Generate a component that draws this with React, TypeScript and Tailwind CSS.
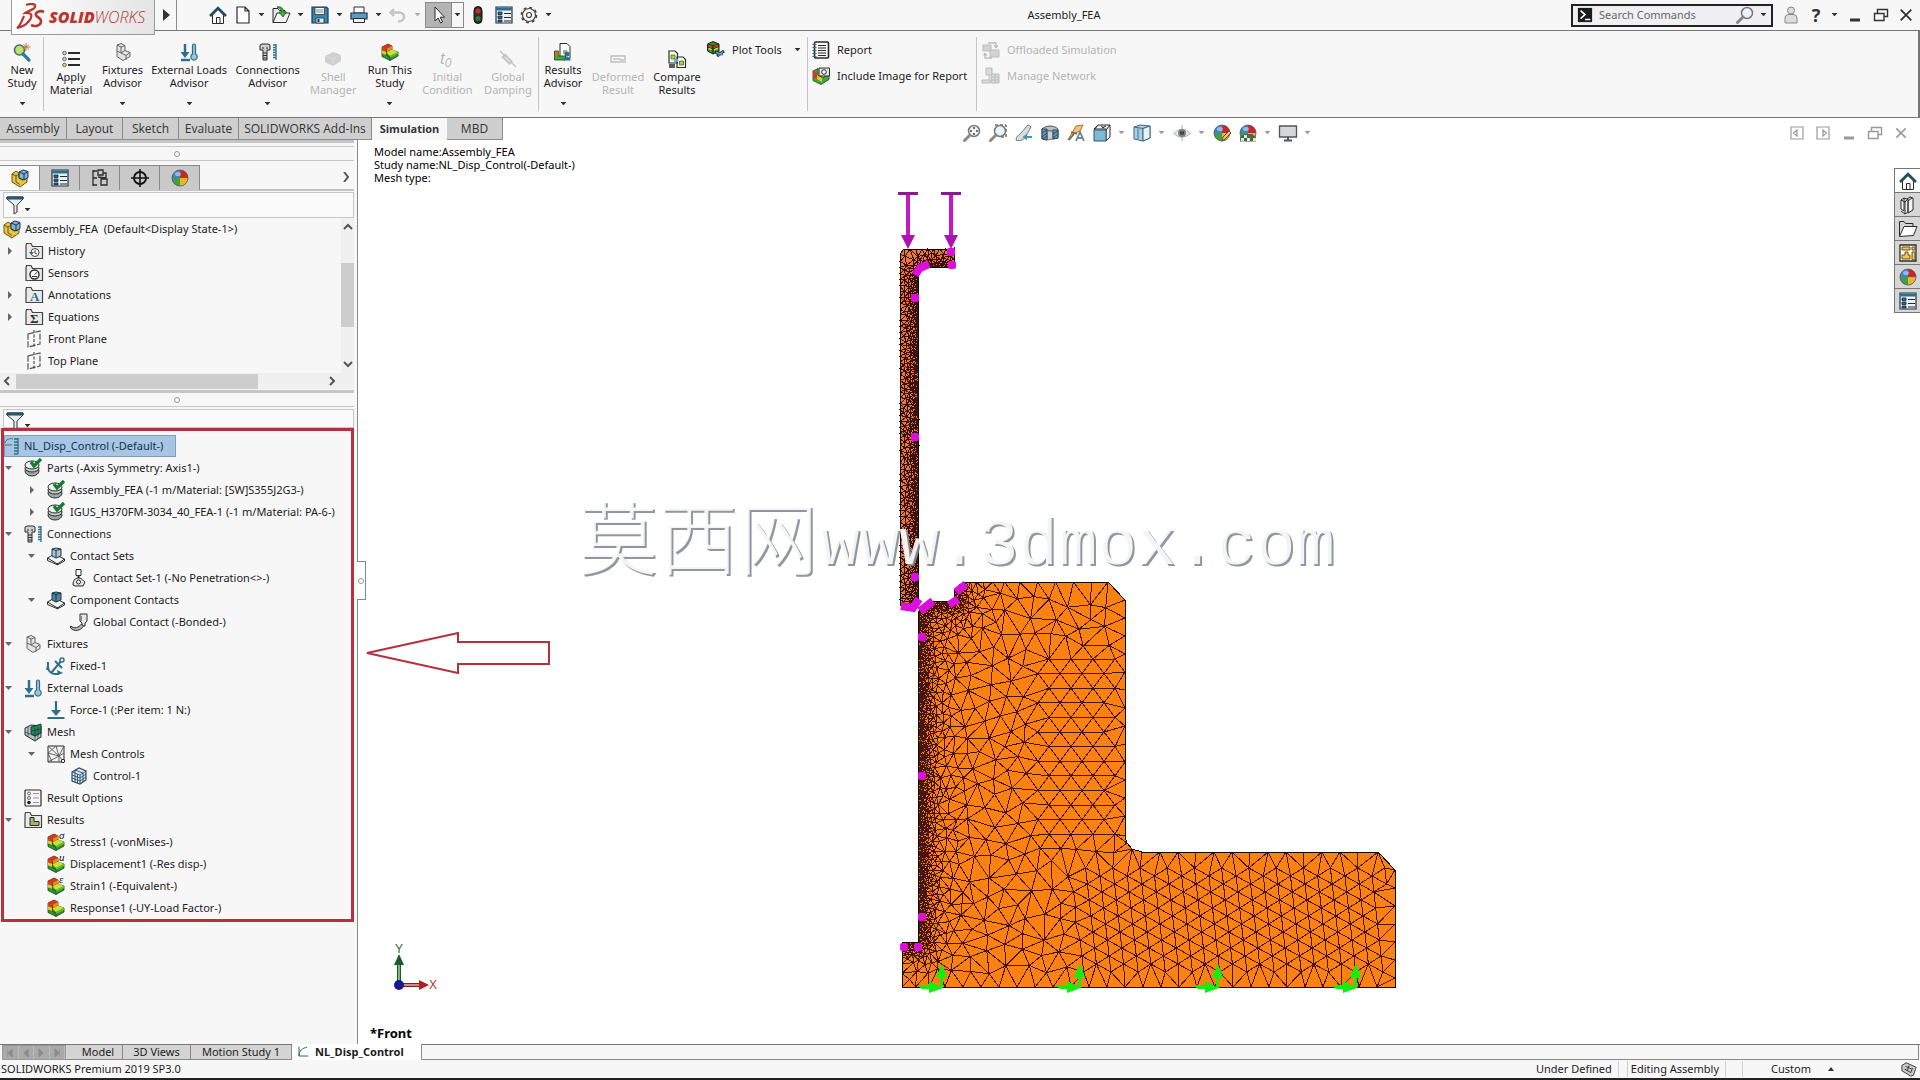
import React from "react";

/* ---------- finite element mesh ---------- */

type Pt = [number, number];

function makeRandom(seed: number) {
  let s = seed;
  return () => {
    s = (s * 1664525 + 1013904223) % 4294967296;
    return s / 4294967296;
  };
}

function inside(p: Pt, poly: Pt[]) {
  let r = false;
  for (let i = 0, j = poly.length - 1; i < poly.length; j = i++) {
    const [xi, yi] = poly[i];
    const [xj, yj] = poly[j];
    if (yi > p[1] !== yj > p[1] && p[0] < ((xj - xi) * (p[1] - yi)) / (yj - yi) + xi) r = !r;
  }
  return r;
}

function segDist(p: Pt, s: number[]) {
  const dx = s[2] - s[0];
  const dy = s[3] - s[1];
  const t = Math.max(0, Math.min(1, ((p[0] - s[0]) * dx + (p[1] - s[1]) * dy) / (dx * dx + dy * dy)));
  return Math.hypot(p[0] - s[0] - t * dx, p[1] - s[1] - t * dy);
}

interface Circle { a: number; b: number; c: number; x: number; y: number; r: number }

function circum(pts: Pt[], a: number, b: number, c: number): Circle {
  const [ax, ay] = pts[a];
  const [bx, by] = pts[b];
  const [cx, cy] = pts[c];
  const d = 2 * (ax * (by - cy) + bx * (cy - ay) + cx * (ay - by)) || 1e-9;
  const x = ((ax * ax + ay * ay) * (by - cy) + (bx * bx + by * by) * (cy - ay) + (cx * cx + cy * cy) * (ay - by)) / d;
  const y = ((ax * ax + ay * ay) * (cx - bx) + (bx * bx + by * by) * (ax - cx) + (cx * cx + cy * cy) * (bx - ax)) / d;
  return { a, b, c, x, y, r: (ax - x) ** 2 + (ay - y) ** 2 };
}

function delaunay(input: Pt[]): [Pt[], number[][]] {
  const pts = input.slice().sort((p, q) => p[0] - q[0]);
  const n = pts.length;
  pts.push([-9000, -9000], [11000, -9000], [1000, 14000]);
  let open: Circle[] = [circum(pts, n, n + 1, n + 2)];
  const closed: Circle[] = [];
  for (let i = 0; i < n; i++) {
    const [x, y] = pts[i];
    const edges: number[][] = [];
    const next: Circle[] = [];
    for (const t of open) {
      const dx = x - t.x;
      if (dx > 0 && dx * dx > t.r) {
        closed.push(t);
        continue;
      }
      const dy = y - t.y;
      if (dx * dx + dy * dy > t.r) {
        next.push(t);
        continue;
      }
      edges.push([t.a, t.b], [t.b, t.c], [t.c, t.a]);
    }
    const seen = new Map<number, number[] | null>();
    for (const e of edges) {
      const k = Math.min(e[0], e[1]) * 100000 + Math.max(e[0], e[1]);
      seen.set(k, seen.has(k) ? null : e);
    }
    seen.forEach((e) => {
      if (e) next.push(circum(pts, e[0], e[1], i));
    });
    open = next;
  }
  const all = closed.concat(open).filter((t) => t.a < n && t.b < n && t.c < n);
  return [pts, all.map((t) => [t.a, t.b, t.c])];
}

function buildMesh(poly: Pt[], size: (p: Pt) => number, fixed: Pt[], seed: number) {
  const rnd = makeRandom(seed);
  const pts: Pt[] = [];
  const jig = (p: Pt): Pt => [p[0] + (rnd() - 0.5) * 0.02, p[1] + (rnd() - 0.5) * 0.02];
  poly.forEach((p, i) => {
    const q = poly[(i + 1) % poly.length];
    const len = Math.hypot(q[0] - p[0], q[1] - p[1]);
    pts.push(jig(p));
    let d = size(p);
    while (d < len) {
      const pt: Pt = [p[0] + ((q[0] - p[0]) * d) / len, p[1] + ((q[1] - p[1]) * d) / len];
      const h = size(pt);
      if (d > len - h * 0.5) break;
      pts.push(jig(pt));
      d += h;
    }
  });
  const free = (p: Pt, k: number) => {
    const r = size(p) * k;
    const r2 = r * r;
    for (const q of pts) {
      const dx = q[0] - p[0];
      if (dx > r || dx < -r) continue;
      const dy = q[1] - p[1];
      if (dx * dx + dy * dy < r2) return false;
    }
    return true;
  };
  fixed.forEach((p) => {
    if (inside(p, poly) && free(p, 0.45)) pts.push(jig(p));
  });
  const cand: Pt[] = [];
  const xs = poly.map((p) => p[0]);
  const ys = poly.map((p) => p[1]);
  for (let x = Math.min(...xs); x < Math.max(...xs); x += 3)
    for (let y = Math.min(...ys); y < Math.max(...ys); y += 3) {
      const k = size([x, y]) < 6 ? 5 : 1;
      for (let m = 0; m < k; m++) {
        const p: Pt = [x + rnd() * 3, y + rnd() * 3];
        if (inside(p, poly)) cand.push(p);
      }
    }
  for (let i = cand.length - 1; i > 0; i--) {
    const j = Math.floor(rnd() * (i + 1));
    [cand[i], cand[j]] = [cand[j], cand[i]];
  }
  cand.forEach((p) => {
    if (free(p, 0.82)) pts.push(p);
  });
  const [all, tris] = delaunay(pts);
  return tris
    .filter(([a, b, c]) => inside([(all[a][0] + all[b][0] + all[c][0]) / 3, (all[a][1] + all[b][1] + all[c][1]) / 3], poly))
    .map((t) => "M" + t.map((i) => all[i][0].toFixed(1) + " " + all[i][1].toFixed(1)).join("L") + "Z")
    .join("");
}

const BODY: Pt[] = [
  [963, 582], [1108, 582], [1125, 600], [1125, 836], [1127, 843], [1132, 849], [1142, 852], [1378, 852], [1395, 870],
  [1395, 987], [902, 987], [902, 942], [918, 942], [918, 612], [932, 601], [954, 601], [954, 590],
];
const BAR: Pt[] = [
  [904, 249], [954, 249], [954, 267], [928, 267], [921, 270], [918, 277], [918, 600], [913, 609], [900, 605], [900, 254],
];

const bodyFine = [[918, 612, 918, 943], [918, 612, 932, 601], [932, 601, 954, 601], [954, 601, 954, 588], [902, 942, 918, 942]];
const barFine = [[918, 277, 918, 603], [928, 267, 954, 267], [918, 277, 928, 267]];
const bodySize = (p: Pt) => {
  const d = Math.min(...bodyFine.map((s) => segDist(p, s)));
  return Math.min(18, 1.6 + 0.12 * Math.min(d, 8) + 0.3 * Math.max(0, d - 8));
};
const barSize = (p: Pt) => Math.min(6, 1.6 + 0.24 * Math.min(...barFine.map((s) => segDist(p, s))));

const lattice: Pt[] = [];
for (let r = 0; r < 13; r++) for (let c = 0; c < 4; c++) lattice.push([(r % 2 ? 1104 : 1115) - c * 22, 659 + r * 14.6]);
for (let i = -6; i < 19; i++)
  for (let j = -16; j < 16; j++) {
    const p: Pt = [1140 + i * 14.5 + j * 1.8, 868 + i * 8 + j * 16];
    if (p[1] > 860 && p[1] < 978 && p[0] > 1080 && p[0] < 1387) lattice.push(p);
  }

const bodyMesh = buildMesh(BODY, bodySize, lattice, 7);
const barMesh = buildMesh(BAR, barSize, [], 21);
const toPath = (p: Pt[]) => "M" + p.map((q) => q.join(" ")).join("L") + "Z";

const DOTS: Pt[] = [
  [951, 252], [952, 265], [915, 298], [915, 437], [915, 577], [922, 637], [922, 776], [922, 917], [904, 947], [918, 947],
];

function Scene() {
  return (
    <svg className="absolute inset-0 h-full w-full" viewBox="358 140 1562 904" role="img" aria-label="Meshed assembly, front view">
      <clipPath id="body-outline"><path d={toPath(BODY)} /></clipPath>
      <g shapeRendering="crispEdges">
        <path d={toPath(BODY)} fill="#fb8210" />
        <path d={bodyMesh} fill="none" stroke="#471512" strokeWidth="1" clipPath="url(#body-outline)" />
        <path d={toPath(BODY)} fill="none" stroke="#140800" />
        <path d={toPath(BAR)} fill="#e8793c" />
        <path d={barMesh} fill="none" stroke="#3a1010" strokeWidth="1" />
        <path d={toPath(BAR)} fill="none" stroke="#140800" />
      </g>
      <g fill="#d911d9">
        {DOTS.map(([x, y]) => (
          <rect key={x + "-" + y} x={x - 4} y={y - 4} width="8" height="8" rx="2" />
        ))}
      </g>
      <g stroke="#d911d9" strokeWidth="8" fill="none">
        <path d="M915 275l5-7 9-4M901 606l12 2 6-9M920 611l13-10M949 605l9-6M956 592l10-8" />
      </g>
      {[908, 951].map((x) => (
        <g key={x}>
          <path d={`M${x} 194V236`} stroke="#c815c8" strokeWidth="4" />
          <path d={`M${x - 10} 193.500h20`} stroke="#8a1c8a" strokeWidth="3" />
          <path d={`M${x - 7} 235h14l-7 14z`} fill="#b012b0" />
        </g>
      ))}
      {[942, 1080, 1218, 1356].map((x) => (
        <g key={x} fill="#10f010">
          <path d={`M${x - 2} 988v-11h-4l6-13 5 13h-4v11z`} />
          <path d={`M${x - 25} 985h12v-4l14 7-14 5v-4h-7z`} />
        </g>
      ))}
      <path d="M367 653L458 633V642H549V664H458V673Z" fill="#fff" stroke="#b72f3c" strokeWidth="2" />
      <g>
        <path d="M400 985h22" stroke="#7d1f22" strokeWidth="4" />
        <path d="M400 985h20" stroke="#d08a8a" strokeWidth="2" />
        <path d="M419 980l10 5-10 5z" fill="#b01f24" />
        <path d="M399 984v-20" stroke="#1f5a2c" strokeWidth="4" />
        <path d="M399 984v-20" stroke="#79b879" strokeWidth="2" />
        <path d="M394 965l5-11 5 11z" fill="#1f5a2c" />
        <circle cx="399" cy="985" r="5" fill="#141a8a" />
        <text x="395" y="953" fontSize="12" fill="#2f6b3a" fontFamily="Liberation Sans, sans-serif">Y</text>
        <text x="429" y="989" fontSize="12" fill="#b03030" fontFamily="Liberation Sans, sans-serif">X</text>
      </g>
      <g fill="#fff" fillOpacity="0.9" className="[filter:drop-shadow(2px_2px_0px_#858c96)]">
        <text x="578" y="568" fontSize="80" fontWeight="300" fontFamily="Noto Sans CJK SC, sans-serif">莫西网</text>
        <text x="820" y="564" fontSize="66" fontFamily="Liberation Mono, monospace">www.3dmox.com</text>
      </g>
    </svg>
  );
}

/* ---------- icons ---------- */

const K = "#2b2b2b";
const B = "#2e6f8e";
const L = "#9cc3d8";

const folder = (
  <path d="M1 3.500V16.500H17.500V4.500H7.500L6 1.500H1.500Z" fill="#e9e9e9" stroke="#444" strokeWidth="1.200" />
);
const plot = (
  <>
    <path d="M1 4l6-3 4 2v4l6 2v4l-8 4.500-8-4z" fill="#2a9a30" stroke="#1d3d18" strokeWidth=".8" />
    <path d="M1 4l6-3 4 2-5.500 3z" fill="#e03020" />
    <path d="M1 4l4.500 2v3L1 7.500z" fill="#d8401c" />
    <path d="M1 7.500L5.500 9v3L1 10.500z" fill="#e8c828" />
    <path d="M5.500 6L11 3v3L5.500 9z" fill="#f08a18" />
    <path d="M5.500 9.500l5.500-3 6 2.500-8 4z" fill="#d9dc30" />
    <path d="M9 13l8-4v2l-8 4z" fill="#5fbf38" />
    <path d="M5.500 6v6.500L9 14v3.500" fill="none" stroke="#1d3d18" strokeWidth=".7" />
  </>
);
const bolt = (
  <>
    <path d="M1 2l2-1h6l2 1v5H8v10H4V7H1z" fill="#cfcfcf" stroke={K} />
    <path d="M4 10h4M4 12.500h4M4 15h4M4 4v2M8 4v2" stroke={K} />
    <path d="M17 1v16M17 2h-3M17 4.500h-3M17 7h-3M17 9.500h-3M17 12h-3M17 14.500h-3" stroke={B} strokeWidth="1.300" fill="none" />
  </>
);
const ball = (
  <>
    <path d="M9 9V1A8 8 0 0 0 1 10Z" fill="#3d86c6" />
    <path d="M9 9V1A8 8 0 0 1 17 9Z" fill="#c8262a" />
    <path d="M9 9H17A8 8 0 0 1 8 17Z" fill="#e8b820" />
    <path d="M9 9L1 9A8 8 0 0 0 9 17Z" fill="#3fa044" />
    <ellipse cx="7" cy="5" rx="3" ry="2" fill="#fff" opacity=".45" />
    <circle cx="9" cy="9" r="8" fill="none" stroke="#555" strokeWidth=".8" />
  </>
);
const list = (
  <>
    <path d="M1 1h16v16H1z" fill="#e8f1f5" stroke="#234" strokeWidth="1.200" />
    <path d="M1 3h16" stroke={B} strokeWidth="3" />
    <path d="M3 6h4v2.500H3zM3 10h4v2.500H3zM3 14h4v2H3z" fill={B} stroke="#123" strokeWidth=".8" />
    <path d="M9 7.500h7M9 11.500h7M9 15h7" stroke={K} />
  </>
);
const part = (
  <>
    <ellipse cx="8" cy="12" rx="7" ry="5" fill="#9fa6a6" stroke={K} />
    <ellipse cx="8" cy="9" rx="7" ry="4" fill="#c9cccc" stroke={K} />
    <ellipse cx="8" cy="6" rx="7" ry="4" fill="#eef0f0" stroke={K} />
    <path d="M7 3l3 4 7-7" fill="none" stroke="#147a34" strokeWidth="3.200" />
  </>
);
const fixture = (
  <>
    <path d="M3 2l4-1.500 4 2v5l5 2v4l-7 4-6-4z" fill="#e4e4e4" stroke="#666" />
    <path d="M3 2l4 2v6l5 2.500 4-3M7 4l4-1.500M12 12.500V17M7 10l4-2.500M3 8l4 2" fill="none" stroke="#666" />
  </>
);
const loads = (
  <>
    <path d="M5 1v11M1 17h9" stroke={B} strokeWidth="2.500" />
    <path d="M0.500 9h9L5 15z" fill={B} />
    <path d="M12.500 2.500a1.500 1.500 0 0 1 3 0V11a3.200 3.200 0 1 1-3 0z" fill={L} stroke={B} strokeWidth="1.200" />
  </>
);
const stamp = (fill: string) => (
  <>
    <path d="M0.500 11l7-4 10 5-7 5z" fill="#f2f2f2" stroke={K} />
    <path d="M0.500 11v2.500L10.500 17.800V16M17.500 12v2l-7 3.800" fill="none" stroke={K} />
    <path d="M5 2l4-1 5 1v7l-5 2-4-2z" fill={fill} stroke="#234" />
    <path d="M5 2l4 1.500L14 2M9 3.500V11" fill="none" stroke="#234" />
  </>
);
const magnifier = (
  <>
    <circle cx="11" cy="7" r="5.500" fill="#eaf3f8" stroke="#777" strokeWidth="1.500" />
    <path d="M7 11L1.500 16.500" stroke="#888" strokeWidth="3" strokeLinecap="round" />
  </>
);
const home = (
  <>
    <path d="M3.500 9v8.500h11V9L9 3.500z" fill="#fff" stroke={K} />
    <path d="M7.500 17.500v-6h3.500v6" fill="none" stroke={K} />
    <path d="M1 10L9 2l8 8" fill="none" stroke="#1f4f66" strokeWidth="2.600" />
  </>
);
const asm = (
  <>
    <path d="M1 5l4-3 3 2v5l3 2 5-2v4l-7 5-8-5z" fill="#e8c63c" stroke="#6b5412" />
    <path d="M1 5l4 2v6l4 2.500M5 7l3-2" fill="none" stroke="#6b5412" />
    <path d="M8 3l4-2 5 1.500v6L13 11 8 9z" fill="#7db4cf" stroke="#234" />
    <path d="M8 3l5 2v6M13 5l4-2.500" fill="none" stroke="#234" />
  </>
);
const restore = (
  <path d="M5.500 7V3.500h10v7H12M2.500 7.500h9.500v7H2.500z" fill="none" stroke="currentColor" strokeWidth="1.400" />
);
const tiny = (s: string) => (
  <>
    {plot}
    <text x="12" y="6" fontSize="11" fontStyle="italic" fontFamily="Liberation Serif, serif" fill="#111">{s}</text>
  </>
);

const ICONS: Record<string, React.ReactNode> = {
  home,
  doc: <path d="M3 1h8l4 4v12H3zM11 1v4h4" fill="#fff" stroke={K} strokeWidth="1.200" />,
  open: (
    <>
      <path d="M1 16.500V2.500h5l1.500 2H13V7" fill="#e8e8e8" stroke={K} />
      <path d="M1 16.500L5 7h13l-4 9.500z" fill="#f4f4f4" stroke={K} />
      <path d="M5 1c4-1 6 1 7 5h2.500L11 11 7 6h2.500C9 3 8 2 5 1z" fill="#3fae3a" stroke="#1d5f1d" strokeWidth=".8" />
    </>
  ),
  save: (
    <>
      <path d="M1 1h14.500L17 2.500V17H1z" fill="#3b86ad" stroke="#17394a" strokeWidth="1.200" />
      <path d="M4 1.500h9.500v7H4z" fill="#fff" stroke="#17394a" strokeWidth=".8" />
      <path d="M5 4h7.500M5 6h7.500" stroke="#888" />
      <path d="M5 12h8v5H5z" fill="#dfe9ee" stroke="#17394a" strokeWidth=".8" />
      <path d="M6.500 13h2v3h-2z" fill="#17394a" />
    </>
  ),
  print: (
    <>
      <path d="M4 1h10v6H4z" fill="#fff" stroke={K} />
      <path d="M1 7h16v6H1z" fill="#5d9cbc" stroke="#17394a" strokeWidth="1.200" />
      <path d="M3.500 12.500h11V16.500h-11z" fill="#f2f2f2" stroke={K} />
    </>
  ),
  undo: <path d="M5 3L1.500 6.500 5 10M2 6.500h8c7 0 7 9-1 9" fill="none" stroke="#c4c4c4" strokeWidth="2.400" />,
  cursor: <path d="M5 1v14l3.200-3 2.300 5 2-1-2.300-4.800H14.500z" fill="#fff" stroke={K} />,
  traffic: (
    <>
      <rect x="5" y="0.500" width="8" height="17" rx="4" fill="#33312e" stroke="#111" />
      <circle cx="9" cy="5" r="2.500" fill="#d02a20" />
      <circle cx="9" cy="12.500" r="2.500" fill="#287a34" />
    </>
  ),
  list,
  gear: (
    <>
      <circle cx="9" cy="9" r="6.500" fill="none" stroke="#444" strokeWidth="1.200" />
      <circle cx="9" cy="9" r="7.600" fill="none" stroke="#444" strokeWidth="1.500" strokeDasharray="3 2.970" />
      <circle cx="9" cy="9" r="2.500" fill="none" stroke="#444" strokeWidth="1.200" />
    </>
  ),
  newstudy: (
    <>
      <circle cx="6.500" cy="7" r="5" fill="#bfe06a" stroke="#4b6a78" strokeWidth="1.600" />
      <path d="M10 11l6 6" stroke="#2e78a8" strokeWidth="3.200" strokeLinecap="round" />
      <path d="M13 0v8M9.500 4h8M10.500 1.500l5.500 5M16 1.500l-5.500 5" stroke="#b8741a" strokeWidth=".9" />
    </>
  ),
  material: (
    <>
      <path d="M6 3h12M6 9h12M6 15h12" stroke={K} strokeWidth="1.800" />
      <circle cx="2.500" cy="3" r="1.800" fill="#ccc" stroke="#666" />
      <circle cx="2.500" cy="9" r="1.800" fill="#c9d6de" stroke="#666" />
      <circle cx="2.500" cy="15" r="1.800" fill="#e6d46a" stroke="#666" />
    </>
  ),
  fixture,
  loads,
  bolt,
  shell: (
    <>
      <path d="M1 6l8-4 8 3v6l-8 5-8-4z" fill="#cfcfcf" />
      <path d="M1 6l8 3v7M9 9l8-4" stroke="#dedede" fill="none" />
    </>
  ),
  run: plot,
  t0: (
    <text x="2" y="14" fontSize="17" fontStyle="italic" fill="#b9b9b9" fontFamily="Liberation Sans, sans-serif">
      t<tspan fontSize="12" dy="3">0</tspan>
    </text>
  ),
  damping: <path d="M1 1l6 6M6 4.500l7 7-2.500 2.500-7-7zM12 12l5 5" stroke="#c2c2c2" strokeWidth="1.400" fill="#dcdcdc" />,
  resadv: (
    <>
      <path d="M6 0.500h7l3 3v12H6z" fill="#fff" stroke={K} />
      <path d="M0.500 8h4v5h7v4H0.500z" fill="#3faa3a" stroke="#1d3d18" strokeWidth=".8" />
      <path d="M1 8.500h3.500v4H1z" fill="#e06a20" />
      <path d="M9 7h4v4H9z" fill="#9ab" />
      <circle cx="13" cy="11" r="2.500" fill={B} />
      <path d="M9.500 17.500c0-5 7-5 7 0z" fill={B} />
    </>
  ),
  deformed: (
    <>
      <path d="M2 6h14v6H2z" fill="none" stroke="#bdbdbd" strokeWidth="1.400" />
      <path d="M4 8h8v2H4zM11 9h5v4h-5z" fill="#cfcfcf" />
    </>
  ),
  compare: (
    <>
      <path d="M1 1h6l2.500 2.500V13H1zM9 7h6l2.500 2.500v8H9z" fill="#fff" stroke={K} strokeWidth="1.200" />
      <path d="M3 5h4v4H3zM11.500 11h4v4h-4z" fill="#b5cf3a" stroke="#3b6b1a" strokeWidth=".8" />
      <path d="M1 15h6M1 17h6" stroke={K} strokeWidth="1.300" />
      <path d="M6 9h4v3H6z" fill="#6aa7c6" />
    </>
  ),
  plottools: (
    <>
      <path d="M0.500 3L6 0.500 12 3v7L6 13 0.500 10z" fill="#2d8c2d" stroke="#142814" />
      <path d="M1 6l5 2 6-3M6 5v8M1 3l5 2 6-2" stroke="#142814" fill="none" />
      <path d="M1.500 4.500l3 1.200M7 6l4-1.800" stroke="#d8361e" strokeWidth="2" />
      <path d="M1.500 7.500l3 1.200M7 9l4-1.800" stroke="#e6cf2c" strokeWidth="1.600" />
      <path d="M8 11l8 2M10 15l7-5" stroke="#234" strokeWidth="3.200" />
      <path d="M9 11.500l7 2M11 14.500l5-4" stroke="#5f9cba" strokeWidth="1.500" />
    </>
  ),
  report: (
    <>
      <rect x="2.500" y="1" width="14" height="16" rx="1" fill="#f7f7f7" stroke={K} strokeWidth="1.600" />
      <path d="M6 4.500h8M6 7h8M6 9.500h8M6 12h8M6 14.500h8" stroke={K} strokeWidth="1.100" />
      <path d="M0.500 3.500h4M0.500 6.500h4M0.500 9.500h4M0.500 12.500h4M0.500 15.500h4" stroke={B} strokeWidth="1.200" />
    </>
  ),
  include: (
    <>
      <path d="M1 4l5-2.500v7l5 2 6-3v5l-8 5-8-4z" fill="#3faa3a" stroke="#1d3d18" strokeWidth=".8" />
      <path d="M1 4l4 2v6l-4-2z" fill="#d8361e" />
      <path d="M5 8l5 3v4l-5-3z" fill="#e8c828" />
      <path d="M7 1h10.500v8H7z" fill="#e3e3e3" stroke={K} />
      <circle cx="12" cy="5" r="2.300" fill="#fff" stroke={K} />
    </>
  ),
  offload: (
    <>
      <path d="M1 4h8v6H1zM8 9h9v7H8z" fill="#d3d3d3" stroke="#bcbcbc" />
      <path d="M6 2h8v4M12 4.500l2 2 2-2M10 17H3v-4M1.500 14.500l1.500-2 2 2" stroke="#bcbcbc" fill="none" strokeWidth="1.300" />
    </>
  ),
  network: (
    <>
      <path d="M4 1h6v7H4zM9 7h8v9H9zM0 13h8v3H0z" fill="#dadada" stroke="#bcbcbc" />
      <path d="M9 10h8M9 13h8M13 7v9M7 8v5" stroke="#bcbcbc" />
    </>
  ),
  zoomfit: (
    <>
      {magnifier}
      <path d="M11 3v2M11 9v2M7 7h2M13 7h2" stroke="#444" strokeWidth="1.500" />
    </>
  ),
  zoomarea: (
    <>
      <path d="M6 1h11v12h-5" stroke={K} strokeDasharray="3 2" fill="none" />
      {magnifier}
    </>
  ),
  prev: (
    <>
      <path d="M1 16c0-4 3-5 5-7l7-8 3 2-5 9c-1 3-6 6-10 4z" fill="#d8dde0" stroke="#777" />
      <path d="M17 12h-5V9.500L7.500 13l4.500 3.500V14h5z" fill="#4d93b4" />
    </>
  ),
  section: (
    <>
      <path d="M1 5c4-4 12-4 16 0v9l-5 1V7H6v9l-5-1z" fill="#b8bec4" stroke="#556" />
      <path d="M6 7h6v8l-6 1z" fill="#c9ced2" stroke="#778" />
      <path d="M1 5h5v11l-5-1zM12 6h5v8l-5 1z" fill="#5d9cbc" stroke="#345" />
      <path d="M1 9l5-3M1 13l5-4M2 15l4-3M12 10l5-3M12 14l5-4" stroke="#234" strokeWidth=".8" />
    </>
  ),
  anno: (
    <>
      <path d="M1 16L9 2l7-1-3 6-9 4z" fill="#f1c27a" stroke="#a8752a" />
      <path d="M4 8l6 2M2 16l5-6" stroke="#666" strokeWidth="1.500" />
      <path d="M9 17l4-9 4 9M11 14h5" fill="none" stroke="#6a8797" strokeWidth="1.800" />
    </>
  ),
  orient: (
    <>
      <path d="M5 1h12v12l-4 4V5H1z" fill="#f2f2f2" stroke={K} />
      <path d="M1 6h12v11H1z" fill="#7db8d4" stroke="#2c5b73" />
      <path d="M1 6l4-5M13 6l4-5M8 2l3 2M9 4l4-2" stroke={K} fill="none" />
    </>
  ),
  style: (
    <>
      <path d="M1 3l6-2 10 1v12l-7 3-9-2z" fill="#a9d0e2" stroke="#3f6678" />
      <path d="M1 3l9 1.500V17M10 4.500L17 2" fill="none" stroke="#3f6678" />
      <path d="M10 4.500L17 2v12l-7 3z" fill="#e6f2f8" stroke="#3f6678" />
      <path d="M5 4v11" stroke="#6aa3bf" strokeWidth="2" />
    </>
  ),
  eye: (
    <>
      <path d="M0.500 9.500Q9 1 17.500 9.500 9 17 0.500 9.500z" fill="#e6e6e6" stroke="#b4b4b4" />
      <circle cx="9" cy="9" r="4" fill="#7a8084" />
      <circle cx="9" cy="9" r="2" fill="#2a2d30" />
      <path d="M9 1v16" stroke="#888" strokeWidth=".7" />
    </>
  ),
  ball,
  appearance: (
    <>
      {ball}
      <path d="M9 17l1-4 6-6 2 2-6 6z" fill="#e9c66a" stroke="#6d4a14" />
    </>
  ),
  scene: (
    <>
      {ball}
      <path d="M1 13l5-3h7l4 3v4.500H1z" fill="#3f5f3f" opacity=".9" />
      <path d="M2 14h3v3H2zM8 14h3v3H8zM14 14h3v3h-3zM5 11h3v3H5z" fill="#dfe9df" />
    </>
  ),
  monitor: (
    <>
      <path d="M0.500 2h17v11H.5z" fill="#d5d8da" stroke="#555" strokeWidth="1.300" />
      <path d="M9 13v3M5 16.500h8" stroke="#555" strokeWidth="2" />
    </>
  ),
  asm,
  tree: (
    <path d="M2 1v16M2 2h4M2 9h4M2 16h4M7 1h5v5H7zM10 10h6v6h-6zM7 8l8 1M12 4h3v5" fill="none" stroke={K} strokeWidth="1.300" />
  ),
  target: (
    <>
      <circle cx="9" cy="9" r="6" fill="none" stroke="#111" strokeWidth="1.800" />
      <path d="M9 0v18M0 9h18" stroke="#111" strokeWidth="1.600" />
    </>
  ),
  funnel: (
    <>
      <path d="M1 1h16v2l-6 6v7l-3 2V9L1 3z" fill="#e6eef2" stroke="#333" />
      <path d="M1 1h16v2H1z" fill={B} stroke="#1d4254" />
    </>
  ),
  history: (
    <>
      {folder}
      <circle cx="10" cy="10.500" r="4" fill="#fff" stroke="#444" />
      <path d="M10 8v3l2 1" stroke="#444" fill="none" />
      <path d="M4 10l2.500 3L9 10z" fill={B} />
    </>
  ),
  sensors: (
    <>
      {folder}
      <circle cx="9.500" cy="10.500" r="4.500" fill="#fff" stroke={K} strokeWidth="1.400" />
      <path d="M9.500 10.500l2.500-2M7 12.500h5" stroke={K} />
    </>
  ),
  annotations: (
    <>
      {folder}
      <text x="5" y="15" fontSize="13" fontWeight="700" fill={B} fontFamily="Liberation Serif, serif">A</text>
    </>
  ),
  equations: (
    <>
      {folder}
      <text x="5" y="15" fontSize="13" fontWeight="700" fill="#333" fontFamily="Liberation Serif, serif">Σ</text>
    </>
  ),
  plane: (
    <>
      <path d="M3 4L15 1v13L3 17z" fill="none" stroke="#555" strokeWidth="1.200" strokeDasharray="6 1.500" />
      <path d="M9 0v18" stroke="#333" strokeDasharray="3 1.500" />
    </>
  ),
  study: (
    <>
      <path d="M0 8h7M0 6c1-4 5-5 8-4" stroke="#567" fill="none" />
      <path d="M13 1v16M13 2H9M13 5H9M13 8H9M13 11H9M13 14H9M13 17H9" stroke={B} strokeWidth="1.300" />
    </>
  ),
  part,
  contactsets: stamp("#a8c4d4"),
  contact: (
    <>
      <path d="M6 0.500h5v6H6z" fill="#fff" stroke={K} />
      <path d="M8.500 6v4" stroke={K} strokeWidth="2" />
      <path d="M3 16c0-6 3-7 6-7s4 3 6 4l-2 4H5z" fill="#e3e3e3" stroke={K} />
      <circle cx="8.500" cy="13" r="2" fill="#fff" stroke={K} />
    </>
  ),
  compcontacts: stamp("#4a86a6"),
  global: (
    <>
      <path d="M10 1h7v7l-2 2v3h-3v-3l-2-2z" fill="#e8e8e8" stroke={K} />
      <path d="M10 3h2v5h-2z" fill="#888" />
      <path d="M0.500 13c4 3 8 2 11-2l2 2c-3 5-9 6-13 2z" fill="#b9b9b9" stroke={K} />
    </>
  ),
  fixed: (
    <>
      <path d="M1 5v4c0 5 3 8 7 8h4M1 9l-1 4M4 16L15 3M8 4l7 7" stroke={B} strokeWidth="2" fill="none" />
      <circle cx="15" cy="3" r="2" fill="#fff" stroke={B} strokeWidth="1.500" />
      <path d="M10 13l6 3-5 2z" fill={B} />
    </>
  ),
  force: (
    <>
      <path d="M9 0v11M0.500 17h17" stroke={B} strokeWidth="2.200" />
      <path d="M4 9h10l-5 6z" fill={B} />
    </>
  ),
  mesh: (
    <>
      <path d="M1 5l6-3 10 1v11l-6 4-10-6z" fill="#b9c6c0" stroke={K} />
      <path d="M7 4l10-3v9l-6 3-4-2z" fill="#1f8a54" stroke="#123" strokeWidth=".8" />
      <path d="M11 5v13M14 4v12M7 8l10-2M4 4v10M1 9l10 4 6-3" stroke="#234" strokeWidth=".7" fill="none" />
    </>
  ),
  meshctl: (
    <>
      <path d="M1 1h16v16H1z" fill="#f1f1f1" stroke={K} />
      <path d="M1 1l11 10 5-10M1 17l11-6 5 6M9 1l3 10M1 8l11 3M1 8l8-7M5 17L1 8M17 8l-5 3M12 11v6" stroke="#555" strokeWidth=".9" fill="none" />
      <circle cx="16" cy="16" r="1.700" fill="#fff" stroke={K} />
    </>
  ),
  control: (
    <>
      <path d="M2 5l7-4 7 3v9l-6 4-8-3z" fill="#dceaf2" stroke="#2c4d63" strokeWidth="1.200" />
      <path d="M2 5l8 3v9M10 8l6-4M5 4v11M7.500 7v9M2 8l8 3 6-4M2 11l8 3 6-4M13 6v9M5 3l8 3" stroke="#2c4d63" strokeWidth=".9" fill="none" />
    </>
  ),
  resopt: (
    <>
      <rect x="1" y="1" width="16" height="16" rx="1" fill="#f5f5f5" stroke={K} strokeWidth="1.200" />
      <circle cx="5" cy="4.500" r="1.500" fill="#fff" stroke="#666" />
      <circle cx="5" cy="9" r="1.500" fill="#fff" stroke="#666" />
      <circle cx="5" cy="13.500" r="1.800" fill="#222" />
      <path d="M9 4.500h6M9 9h6M9 13.500h6" stroke="#999" />
    </>
  ),
  results: (
    <>
      {folder}
      <path d="M6 6.500h4v4h5v4H6z" fill="#9db86a" stroke={K} />
    </>
  ),
  stress: tiny("σ"),
  disp: tiny("u"),
  strain: tiny("ε"),
  library: (
    <>
      <path d="M2 4l3-2v13l-3-2zM2 4l4 2v12l-4-3M6 6l3-3v13l-3 2M9 5l4-3M9 5v12l5-3V2" fill="#f3f3f3" stroke={K} />
      <path d="M5 2l3 1 3-2 3 1" fill="none" stroke={K} />
    </>
  ),
  folderopen: (
    <>
      <path d="M0.500 16.500V1.500H5l1.500 2H14V7" fill="#d2d2d2" stroke={K} />
      <path d="M0.500 16.500L5 6.500h13L14.500 15.500z" fill="#fff" stroke={K} />
    </>
  ),
  palette: (
    <>
      <path d="M1 1h16v16H1z" fill="#fff" stroke={K} strokeWidth="1.300" />
      <path d="M3 3h8v3H3zM13 3h3v3h-3zM6 8h3v3h2v4H3v-4h3zM13 8h3v8h-3z" fill="#f0c850" stroke="#6b5010" />
    </>
  ),
  person: (
    <>
      <circle cx="9" cy="4.500" r="3.500" fill="#dcdcdc" stroke="#888" />
      <path d="M3 17V12q0-3 3-3.500h6q3 .5 3 3.500v5z" fill="#dcdcdc" stroke="#888" />
    </>
  ),
  search: magnifier,
  restore,
  close: <path d="M3 3l12 12M15 3L3 15" stroke="currentColor" strokeWidth="2" />,
  min: <path d="M4 14h10" stroke="currentColor" strokeWidth="3" />,
  paneleft: <path d="M3 3h12v12H3zM9 6v6L5.500 9z" fill="none" stroke="currentColor" strokeWidth="1.200" />,
  paneright: <path d="M3 3h12v12H3zM9 6v6l3.500-3z" fill="none" stroke="currentColor" strokeWidth="1.200" />,
  prompt: (
    <>
      <path d="M1 1h16v16H1z" fill="#1c1c1c" />
      <path d="M4 4l5 4.500L4 13M9 14h6" stroke="#fff" strokeWidth="1.800" fill="none" />
    </>
  ),
  curve: <path d="M3 1v14h14M3 15C3 7 8 3 15 2" fill="none" stroke="#2e6b5e" strokeWidth="1.500" />,
  tag: (
    <>
      <path d="M1 5l5-3 11 5-3 9-3 1L1 11z" fill="#c9c9c9" stroke={K} />
      <path d="M5 6l7 3M4 9l7 4M9 5l-2 6M13 8l-2 5" stroke={K} />
    </>
  ),
  plot,
};

function Icon({ name, className = "h-[18px] w-[18px]" }: { name: string; className?: string }) {
  return (
    <svg viewBox="0 0 18 18" className={`shrink-0 overflow-visible ${className}`} aria-hidden="true">
      {ICONS[name]}
    </svg>
  );
}

function Caret({ className = "text-[#2b2b2b]" }: { className?: string }) {
  return (
    <svg viewBox="0 0 7 4" className={`h-1 w-[7px] shrink-0 ${className}`} aria-hidden="true">
      <path d="M1 0h5L3.500 3z" stroke="currentColor" strokeWidth=".6" fill="currentColor" />
    </svg>
  );
}

/* ---------- title bar ---------- */

function QuickTool({ name, label, width }: { name: string; label: string; width: string }) {
  return (
    <span className={`flex items-center justify-between ${width}`}>
      <button aria-label={label}><Icon name={name} /></button>
      <button aria-label={`${label} options`}><Caret className={name === "undo" ? "text-[#aaa]" : "text-[#2b2b2b]"} /></button>
    </span>
  );
}

function TitleBar() {
  return (
    <header className="relative flex h-[31px] shrink-0 items-center border-b border-[#767676] bg-[#f7f7f7]">
      <div className="z-10 ml-[11px] -mb-1 flex h-[35px] w-[144px] items-center border border-t-0 border-[#9a9a9a] bg-linear-to-r from-white to-[#e4e4e4] pl-1 text-[#b8362f]">
        <svg viewBox="0 0 30 28" className="h-7 w-[30px] shrink-0" aria-hidden="true">
          <path d="M10 2c8-3 12 1 7 4-3 2-7 3-8 4 7-1 8 3 4 8-3 4-7 6-12 7 4-3 5-8 7-12" fill="none" stroke="#b8362f" strokeWidth="2.200" />
          <path d="M28 9c-4-2-9 0-8 3s6 3 5 7-6 5-10 3" fill="none" stroke="#b8362f" strokeWidth="2.600" />
        </svg>
        <span className="pl-[3px] font-['Open_Sans',sans-serif] text-[16px] leading-5 font-light italic">
          <b className="font-extrabold">SOLID</b>WORKS
        </span>
      </div>
      <button aria-label="Expand menu" className="ml-[4px] flex w-[14px] justify-center">
        <svg viewBox="0 0 7 12" className="h-3 w-[7px]" aria-hidden="true"><path d="M0 0l7 6-7 6z" fill="#333" /></svg>
      </button>
      <span className="ml-[3px] h-full w-px bg-[#8c8c8c]" />
      <nav aria-label="Quick access" className="ml-8 flex items-center">
        <button aria-label="Home"><Icon name="home" /></button>
        <span className="w-[7px]" />
        <QuickTool name="doc" label="New" width="w-[31px]" />
        <span className="w-[7px]" />
        <QuickTool name="open" label="Open" width="w-[32px]" />
        <span className="w-[7px]" />
        <QuickTool name="save" label="Save" width="w-[32px]" />
        <span className="w-[7px]" />
        <QuickTool name="print" label="Print" width="w-[32px]" />
        <span className="w-[7px]" />
        <QuickTool name="undo" label="Undo" width="w-[32px]" />
        <span className="ml-1 flex h-[26px] border border-[#8a8a8a]">
          <button aria-label="Select" className="flex w-[26px] items-center justify-center border-r border-[#8a8a8a] bg-[#b4b4b4]">
            <Icon name="cursor" />
          </button>
          <button aria-label="Select options" className="flex w-[11px] items-center justify-center"><Caret /></button>
        </span>
        <button aria-label="Rebuild" className="ml-[5px]"><Icon name="traffic" /></button>
        <button aria-label="File properties" className="ml-2"><Icon name="list" /></button>
        <span className="w-[7px]" />
        <QuickTool name="gear" label="Options" width="w-[32px]" />
      </nav>
      <h1 className="flex-1 pr-[3px] pl-[8px] text-center">Assembly_FEA</h1>
      <label className="flex h-[23px] w-[202px] items-center gap-[6px] border-2 border-[#222] bg-[#f0f0f3] px-1">
        <Icon name="prompt" className="h-4 w-4" />
        <input aria-label="Search Commands" placeholder="Search Commands" className="min-w-0 flex-1 bg-transparent outline-none placeholder:text-[#666]" />
        <Icon name="search" />
        <Caret />
      </label>
      <div className="ml-[9px] flex items-center text-[#333]">
        <button aria-label="Account"><Icon name="person" /></button>
        <button aria-label="Help" className="ml-[8px] w-4 text-center text-[18px] leading-[18px] font-bold">?</button>
        <button aria-label="Help options" className="ml-[7px]"><Caret /></button>
        <button aria-label="Minimize" className="ml-[8px]"><Icon name="min" /></button>
        <button aria-label="Restore" className="ml-2"><Icon name="restore" /></button>
        <button aria-label="Close" className="mr-[6px] ml-2"><Icon name="close" className="h-4 w-4" /></button>
      </div>
    </header>
  );
}

/* ---------- ribbon ---------- */

interface Cmd { icon: string; a: string; b: string; w: string; menu?: boolean; off?: boolean }

const STUDY: Cmd[] = [
  { icon: "material", a: "Apply", b: "Material", w: "w-[54px]" },
  { icon: "fixture", a: "Fixtures", b: "Advisor", w: "w-[48px]", menu: true },
  { icon: "loads", a: "External Loads", b: "Advisor", w: "w-[84px]", menu: true },
  { icon: "bolt", a: "Connections", b: "Advisor", w: "w-[72px]", menu: true },
  { icon: "shell", a: "Shell", b: "Manager", w: "w-[58px]", off: true },
  { icon: "run", a: "Run This", b: "Study", w: "w-[54px]", menu: true },
  { icon: "t0", a: "Initial", b: "Condition", w: "w-[60px]", off: true },
  { icon: "damping", a: "Global", b: "Damping", w: "w-[60px]", off: true },
];
const RESULTS: Cmd[] = [
  { icon: "resadv", a: "Results", b: "Advisor", w: "w-[48px]", menu: true },
  { icon: "deformed", a: "Deformed", b: "Result", w: "w-[60px]", off: true },
  { icon: "compare", a: "Compare", b: "Results", w: "w-[56px]" },
];

function BigButton({ cmd }: { cmd: Cmd }) {
  return (
    <button
      disabled={cmd.off}
      className={`flex flex-col items-center whitespace-nowrap leading-[13px] ${cmd.w} ${cmd.menu ? "pt-3" : "pt-[19px]"} ${cmd.off ? "text-[#b4b4b4]" : ""}`}
    >
      <Icon name={cmd.icon} />
      <span className="mt-[2px]">{cmd.a}</span>
      <span>{cmd.b}</span>
      {cmd.menu && <span className="mt-[13px]"><Caret /></span>}
    </button>
  );
}

function SmallButton({ icon, label, off }: { icon: string; label: string; off?: boolean }) {
  return (
    <button disabled={off} className={`flex h-[26px] items-center gap-[7px] whitespace-nowrap ${off ? "text-[#b4b4b4]" : ""}`}>
      <Icon name={icon} />
      {label}
    </button>
  );
}

const Sep = () => <span className="my-[6px] w-px shrink-0 bg-[#c4c4c4]" />;

function Ribbon() {
  return (
    <div className="flex h-[87px] shrink-0 border-r-2 border-b border-[#767676] bg-[#f7f7f7]">
      <div className="flex w-[43px] justify-end"><BigButton cmd={{ icon: "newstudy", a: "New", b: "Study", w: "w-[42px]", menu: true }} /></div>
      <Sep />
      <div className="flex w-[494px] justify-between">
        {STUDY.map((c) => <BigButton key={c.a} cmd={c} />)}
      </div>
      <Sep />
      <div className="flex w-[268px]">
        <div className="flex w-[166px] justify-between">
          {RESULTS.map((c) => <BigButton key={c.a} cmd={c} />)}
        </div>
        <div className="flex h-[38px] flex-1 items-center justify-between pr-[6px] pl-[2px]">
          <SmallButton icon="plottools" label="Plot Tools" />
          <button aria-label="Plot Tools options"><Caret /></button>
        </div>
      </div>
      <Sep />
      <div className="flex w-[168px] flex-col pt-[6px] pl-1">
        <SmallButton icon="report" label="Report" />
        <SmallButton icon="include" label="Include Image for Report" />
      </div>
      <Sep />
      <div className="flex flex-col pt-[6px] pl-[5px]">
        <SmallButton icon="offload" label="Offloaded Simulation" off />
        <SmallButton icon="network" label="Manage Network" off />
      </div>
    </div>
  );
}

/* ---------- tabs and view toolbar ---------- */

const TABS = [
  ["Assembly", "w-[67px]"], ["Layout", "w-[56px]"], ["Sketch", "w-[56px]"], ["Evaluate", "w-[60px]"],
  ["SOLIDWORKS Add-Ins", "w-[133px]"], ["Simulation", "w-[75px]"], ["MBD", "w-[56px]"],
];

const HUD: [string, string, boolean][] = [
  ["zoomfit", "Zoom to fit", false], ["zoomarea", "Zoom to area", false], ["prev", "Previous view", false],
  ["section", "Section view", false], ["anno", "Dynamic annotation views", false], ["orient", "View orientation", true],
  ["style", "Display style", true], ["eye", "Hide/show items", true], ["appearance", "Edit appearance", false],
  ["scene", "Apply scene", true], ["monitor", "View settings", true],
];

function TabRow() {
  return (
    <div className="relative z-10 flex h-[22px] shrink-0 bg-white">
      <div role="tablist" className="flex font-['Open_Sans',sans-serif] text-[12px] text-[#333]">
        {TABS.map(([label, w]) => (
          <button
            key={label}
            role="tab"
            aria-selected={label === "Simulation"}
            className={`whitespace-nowrap ${w} ${label === "Simulation" ? "bg-[#f7f7f7] text-[11px] font-bold" : "border-r border-b border-[#8a8a8a] bg-[#cfcfcf]"}`}
          >
            {label}
          </button>
        ))}
      </div>
      <div className="flex h-[30px] flex-1 items-center">
        <div role="toolbar" aria-label="View" className="ml-[460px] flex items-center gap-2">
          {HUD.map(([icon, label, menu]) => (
            <span key={icon} className="flex items-center gap-[7px]">
              <button aria-label={label}><Icon name={icon} /></button>
              {menu && <button aria-label={`${label} options`}><Caret className="text-[#999]" /></button>}
            </span>
          ))}
        </div>
        <div className="mr-[10px] ml-auto flex items-center gap-2 text-[#999]">
          <button aria-label="Collapse left"><Icon name="paneleft" /></button>
          <button aria-label="Collapse right"><Icon name="paneright" /></button>
          <button aria-label="Minimize document"><Icon name="min" /></button>
          <button aria-label="Restore document"><Icon name="restore" /></button>
          <button aria-label="Close document"><Icon name="close" className="h-[14px] w-[18px]" /></button>
        </div>
      </div>
    </div>
  );
}

/* ---------- left panel ---------- */

function Twist({ state }: { state?: "open" | "shut" }) {
  return (
    <svg viewBox="0 0 9 9" className="h-[9px] w-[9px] shrink-0 text-[#666]" aria-hidden="true">
      {state === "open" && <path d="M1 2h7L4.500 6z" fill="currentColor" />}
      {state === "shut" && <path d="M3 0l4 4-4 4z" fill="currentColor" />}
    </svg>
  );
}

const FEATURES: [string, string, boolean][] = [
  ["history", "History", true], ["sensors", "Sensors", false], ["annotations", "Annotations", true],
  ["equations", "Equations", true], ["plane", "Front Plane", false], ["plane", "Top Plane", false],
];

interface Node { level: 1 | 2 | 3; icon: string; label: string; state?: "open" | "shut" }

const NODES: Node[] = [
  { level: 1, icon: "part", label: "Parts (-Axis Symmetry: Axis1-)", state: "open" },
  { level: 2, icon: "part", label: "Assembly_FEA (-1 m/Material: [SW]S355J2G3-)", state: "shut" },
  { level: 2, icon: "part", label: "IGUS_H370FM-3034_40_FEA-1 (-1 m/Material: PA-6-)", state: "shut" },
  { level: 1, icon: "bolt", label: "Connections", state: "open" },
  { level: 2, icon: "contactsets", label: "Contact Sets", state: "open" },
  { level: 3, icon: "contact", label: "Contact Set-1 (-No Penetration<>-)" },
  { level: 2, icon: "compcontacts", label: "Component Contacts", state: "open" },
  { level: 3, icon: "global", label: "Global Contact (-Bonded-)" },
  { level: 1, icon: "fixture", label: "Fixtures", state: "open" },
  { level: 2, icon: "fixed", label: "Fixed-1" },
  { level: 1, icon: "loads", label: "External Loads", state: "open" },
  { level: 2, icon: "force", label: "Force-1 (:Per item: 1 N:)" },
  { level: 1, icon: "mesh", label: "Mesh", state: "open" },
  { level: 2, icon: "meshctl", label: "Mesh Controls", state: "open" },
  { level: 3, icon: "control", label: "Control-1" },
  { level: 1, icon: "resopt", label: "Result Options" },
  { level: 1, icon: "results", label: "Results", state: "open" },
  { level: 2, icon: "stress", label: "Stress1 (-vonMises-)" },
  { level: 2, icon: "disp", label: "Displacement1 (-Res disp-)" },
  { level: 2, icon: "strain", label: "Strain1 (-Equivalent-)" },
  { level: 2, icon: "plot", label: "Response1 (-UY-Load Factor-)" },
];

const INDENT = { 1: "pl-0", 2: "pl-[23px]", 3: "pl-[46px]" };

function Grip() {
  return (
    <div className="mr-[3px] flex h-[15px] shrink-0 items-center justify-center border-y border-[#c6c6c6]">
      <span className="h-[6px] w-[6px] rounded-full border border-[#999]" />
    </div>
  );
}

function Chevron({ d }: { d: string }) {
  return (
    <svg viewBox="0 0 10 10" className="h-[10px] w-[10px] shrink-0" aria-hidden="true">
      <path d={d} fill="none" stroke="#555" strokeWidth="2" />
    </svg>
  );
}

function Filter({ className }: { className: string }) {
  return (
    <label className={`mr-[3px] ml-[3px] flex items-start border border-[#c6c6c6] bg-[#fafafa] pl-[2px] ${className}`}>
      <Icon name="funnel" />
      <span className="mt-3"><Caret /></span>
      <input aria-label="Filter" className="min-w-0 flex-1 bg-transparent outline-none" />
    </label>
  );
}

const PANEL_TABS = [["asm", "FeatureManager"], ["list", "PropertyManager"], ["tree", "ConfigurationManager"], ["target", "DimXpertManager"], ["ball", "DisplayManager"]];

function SidePanel() {
  return (
    <aside className="relative flex w-[358px] shrink-0 flex-col border-r border-[#8a8a8a] bg-[#f7f7f7]">
      <div className="mr-[3px] mb-[3px] h-[3px] bg-[#c4c4c4]" />
      <Grip />
      <div className="mt-[4px] mr-[3px] flex h-[26px] items-center border-b-2 border-[#c4c4c4]">
        {PANEL_TABS.map(([icon, label], i) => (
          <button
            key={label}
            aria-label={label}
            className={`flex h-[25px] w-10 items-center justify-center border-t border-r border-[#8a8a8a] ${i === 0 ? "bg-[#fafafa]" : "bg-[#c9c9c9]"}`}
          >
            <Icon name={icon} />
          </button>
        ))}
        <button aria-label="More tabs" className="mr-[3px] ml-auto"><Chevron d="M3 0l4 5-4 5" /></button>
      </div>
      <Filter className="mt-px h-[26px] pt-[3px]" />

      <div className="mr-[3px] flex h-[155px] overflow-hidden">
        <ul className="min-w-0 flex-1">
          <li className="flex h-[22px] items-center gap-1 pl-[3px] whitespace-pre">
            <Icon name="asm" />
            {"Assembly_FEA  (Default<Display State-1>)"}
          </li>
          {FEATURES.map(([icon, label, kids]) => (
            <li key={label} className="flex h-[22px] items-center gap-[5px] pl-[5px]">
              <Twist state={kids ? "shut" : undefined} />
              <Icon name={icon} className="ml-[6px] h-[18px] w-[18px]" />
              {label}
            </li>
          ))}
        </ul>
        <div className="flex w-[13px] flex-col items-center justify-between bg-[#f0f0f0] py-1">
          <Chevron d="M1 7l4-4 4 4" />
          <span className="mb-[2px] h-[64px] w-full bg-[#cdcdcd]" />
          <Chevron d="M1 3l4 4 4-4" />
        </div>
      </div>
      <div className="mr-[3px] flex h-[16px] items-center bg-[#f0f0f0] pr-[17px] pl-[2px]">
        <Chevron d="M7 1L3 5l4 4" />
        <span className="ml-1 h-[15px] w-[242px] bg-[#cdcdcd]" />
        <span className="ml-auto"><Chevron d="M3 1l4 4-4 4" /></span>
      </div>
      <div className="mt-px mr-[3px] h-[2px] bg-[#c6c6c6]" />
      <Grip />
      <Filter className="mt-[2px] h-[19px] pt-[2px]" />

      <div className="mr-[3px] ml-px border-3 border-[#b7303f] pt-[4px]">
        <ul>
          <li className="flex h-[22px] w-[172px] items-center gap-px border border-[#7f9db9] bg-[#a6c6e3] whitespace-nowrap text-[#12324f]">
            <Icon name="study" />
            NL_Disp_Control (-Default-)
          </li>
          {NODES.map((n) => (
            <li key={n.label} className={`flex h-[22px] items-center whitespace-nowrap ${INDENT[n.level]}`}>
              <Twist state={n.state} />
              <Icon name={n.icon} className="mr-[5px] ml-[11px] h-[18px] w-[18px]" />
              {n.label}
            </li>
          ))}
        </ul>
      </div>
      <button aria-label="Collapse panel" className="absolute top-[421px] -right-[9px] z-10 flex h-[39px] w-[9px] items-center justify-center border border-l-0 border-[#6f8fa8] bg-white">
        <span className="h-[6px] w-[6px] rounded-full border border-[#999]" />
      </button>
    </aside>
  );
}

/* ---------- viewport and footer ---------- */

const TASKS = [["home", "Resources"], ["library", "Design Library"], ["folderopen", "File Explorer"], ["palette", "View Palette"], ["ball", "Appearances"], ["list", "Custom Properties"]];

function Viewport() {
  return (
    <main className="relative min-w-0 flex-1 bg-white">
      <Scene />
      <div className="absolute top-[5px] left-4 leading-[13px] text-black">
        <p>Model name:Assembly_FEA</p>
        <p>Study name:NL_Disp_Control(-Default-)</p>
        <p>Mesh type:</p>
      </div>
      <p className="absolute bottom-[3px] left-[12px] text-[13px] leading-4 font-bold text-black">*Front</p>
      <div className="absolute top-[28px] right-0 flex w-[26px] flex-col border-t border-l border-[#777]">
        {TASKS.map(([icon, label], i) => (
          <button key={label} aria-label={label} className={`flex h-6 items-center justify-center border-b border-[#777] ${i === 0 ? "bg-white" : "bg-[#d6d6d6]"}`}>
            <Icon name={icon} />
          </button>
        ))}
      </div>
    </main>
  );
}

const NAV = ["M5 0L1 4l4 4zM0 0v8", "M5 0L1 4l4 4z", "M1 0l4 4-4 4z", "M1 0l4 4-4 4zM6 0v8"];

function Footer() {
  const tab = "flex items-center justify-center border-r border-b border-[#8a8a8a] bg-[#d4d4d4] whitespace-nowrap";
  return (
    <footer className="shrink-0 bg-[#f7f7f7]">
      <div className="flex h-4 border-t border-[#767676] leading-[14px]">
        <div className="ml-[2px] flex w-[64px] items-stretch border border-[#999] bg-[#a9a9a9]">
          {NAV.map((d) => (
            <button key={d} aria-label="Scroll tabs" className="flex flex-1 items-center justify-center border-r border-[#bdbdbd]">
              <svg viewBox="0 0 6 8" className="h-2 w-[6px]" aria-hidden="true"><path d={d} fill="#8a8a8a" stroke="#8a8a8a" /></svg>
            </button>
          ))}
        </div>
        <button className={`w-[57px] pl-2 ${tab}`}>Model</button>
        <button className={`w-[68px] ${tab}`}>3D Views</button>
        <button className={`w-[101px] ${tab}`}>Motion Study 1</button>
        <button className="-mt-px flex w-[130px] items-center gap-[6px] border-r border-[#8a8a8a] bg-white pl-[5px] font-bold whitespace-nowrap">
          <Icon name="curve" className="h-3 w-3" />
          NL_Disp_Control
        </button>
        <div className="mr-px flex-1 border-r border-b border-[#8a8a8a]" />
      </div>
      <div className="flex h-[20px] items-center border-b-2 border-[#222] pl-px">
        <span className="flex-1">SOLIDWORKS Premium 2019 SP3.0</span>
        <span className="border-r border-[#d0d0d0] pr-[6px]">Under Defined</span>
        <span className="ml-2 border-x border-[#d0d0d0] pr-[6px] pl-[3px]">Editing Assembly</span>
        <button className="ml-4 flex items-center gap-[17px] border-l border-[#d0d0d0] pl-7">
          Custom
          <svg viewBox="0 0 6 4" className="h-1 w-[6px]" aria-hidden="true"><path d="M0 4h6L3 0z" fill="#333" /></svg>
        </button>
        <button aria-label="Tags" className="mr-[3px] ml-[67px]"><Icon name="tag" className="h-4 w-4" /></button>
      </div>
    </footer>
  );
}

export default function App() {
  return (
    <div className="flex min-h-screen flex-col bg-white font-['Noto_Sans','Noto_Sans_CJK_SC',sans-serif] text-[11px] leading-4 text-[#1c1c1c]">
      <TitleBar />
      <Ribbon />
      <TabRow />
      <div className="flex flex-1">
        <SidePanel />
        <Viewport />
      </div>
      <Footer />
    </div>
  );
}
